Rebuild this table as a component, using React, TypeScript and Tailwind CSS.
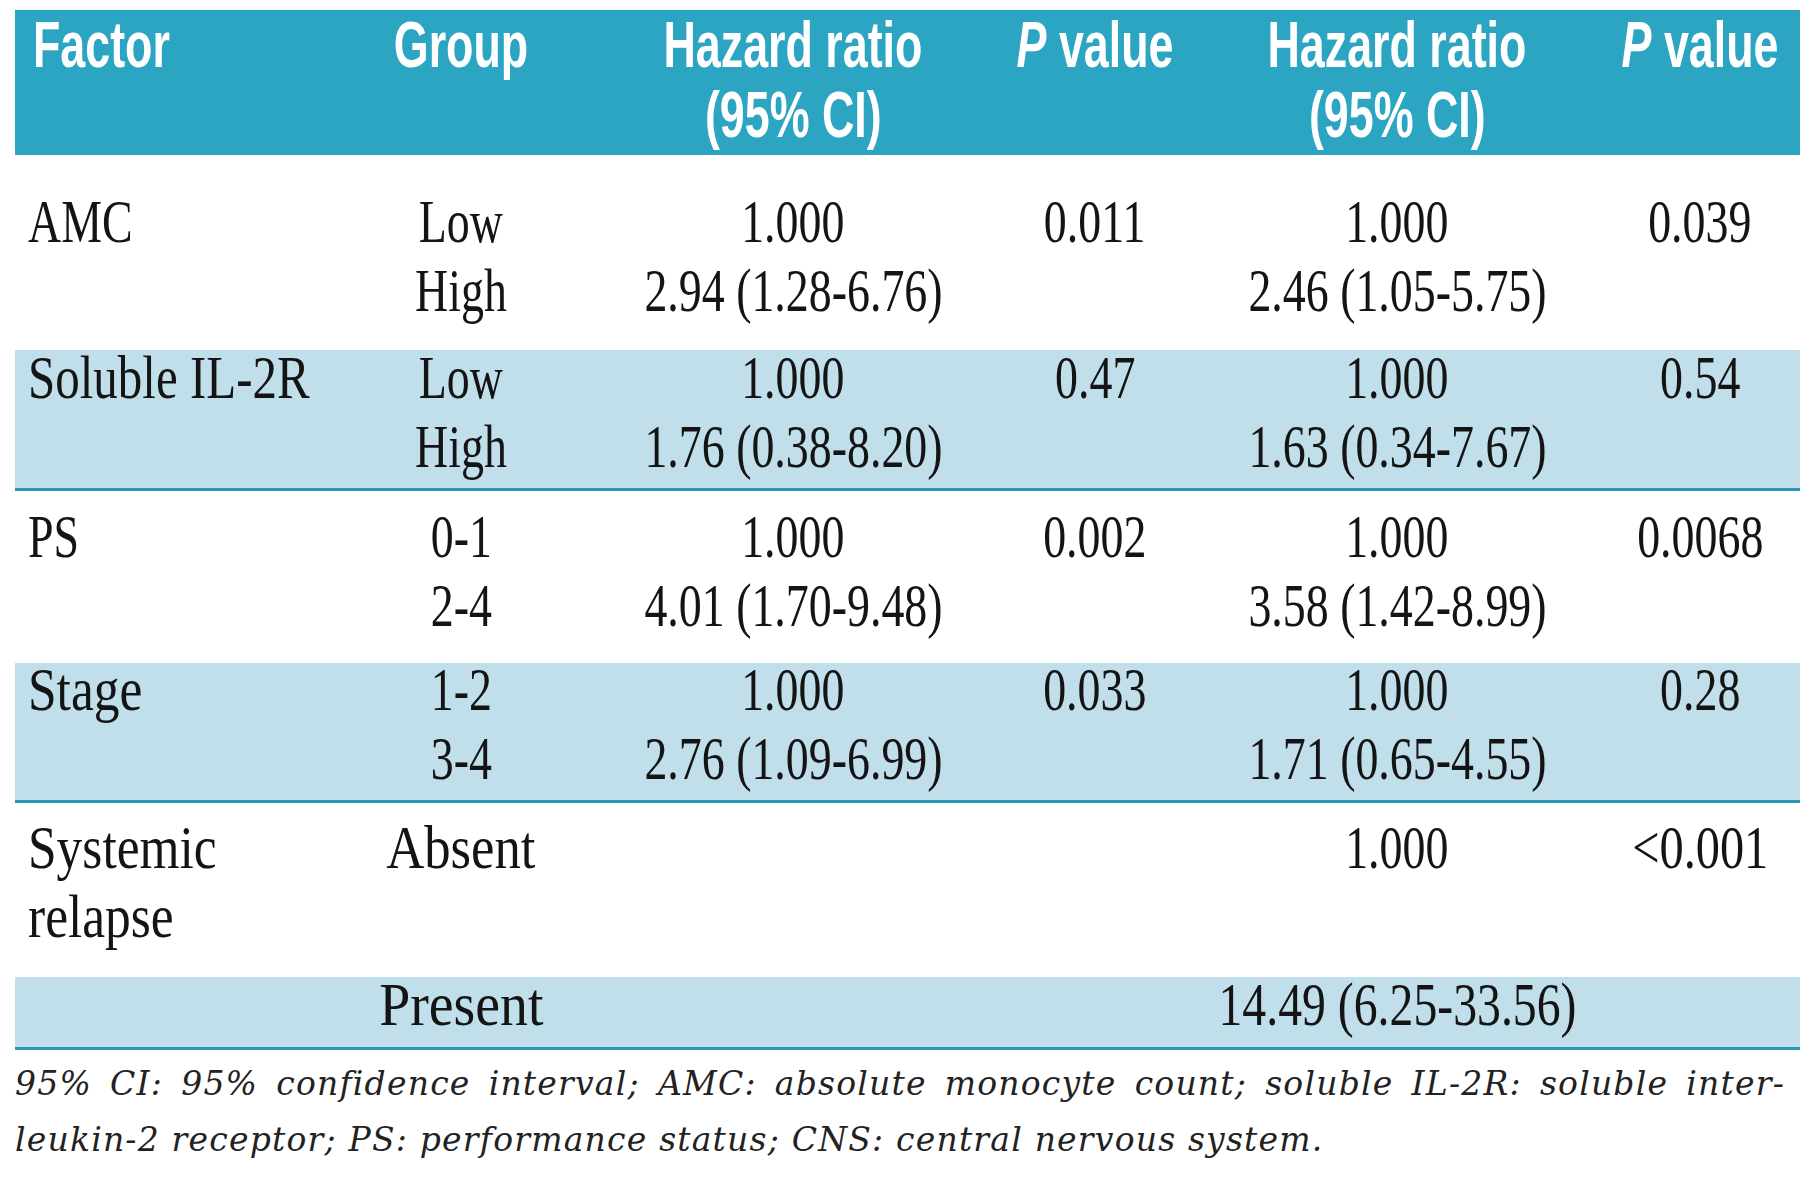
import React from "react";

type Ln = { t: string; s?: string };

type Row = {
  factor: Ln[];
  group: Ln[];
  hr1: Ln[];
  p1: Ln[];
  hr2: Ln[];
  p2: Ln[];
  rowCls: string;
  gridCls: string;
};

const rows: Row[] = [
  {
    factor: [{ t: "AMC" }],
    group: [{ t: "Low" }, { t: "High" }],
    hr1: [{ t: "1.000" }, { t: "2.94 (1.28-6.76)" }],
    p1: [{ t: "0.011" }],
    hr2: [{ t: "1.000" }, { t: "2.46 (1.05-5.75)" }],
    p2: [{ t: "0.039" }],
    rowCls: "flow-root h-[195px] bg-white",
    gridCls: "pt-[32px]",
  },
  {
    factor: [{ t: "Soluble IL-2R", s: "scale-x-[0.79]" }],
    group: [{ t: "Low" }, { t: "High" }],
    hr1: [{ t: "1.000" }, { t: "1.76 (0.38-8.20)" }],
    p1: [{ t: "0.47" }],
    hr2: [{ t: "1.000" }, { t: "1.63 (0.34-7.67)" }],
    p2: [{ t: "0.54" }],
    rowCls: "flow-root h-[141px] bg-[#c0dfea] border-b-[3px] border-[#2a97b8]",
    gridCls: "-mt-[7px]",
  },
  {
    factor: [{ t: "PS" }],
    group: [{ t: "0-1" }, { t: "2-4" }],
    hr1: [{ t: "1.000" }, { t: "4.01 (1.70-9.48)" }],
    p1: [{ t: "0.002" }],
    hr2: [{ t: "1.000" }, { t: "3.58 (1.42-8.99)" }],
    p2: [{ t: "0.0068" }],
    rowCls: "flow-root h-[172px] bg-white",
    gridCls: "pt-[11px]",
  },
  {
    factor: [{ t: "Stage", s: "scale-x-[0.83]" }],
    group: [{ t: "1-2" }, { t: "3-4" }],
    hr1: [{ t: "1.000" }, { t: "2.76 (1.09-6.99)" }],
    p1: [{ t: "0.033" }],
    hr2: [{ t: "1.000" }, { t: "1.71 (0.65-4.55)" }],
    p2: [{ t: "0.28" }],
    rowCls: "flow-root h-[140px] bg-[#c0dfea] border-b-[3px] border-[#2a97b8]",
    gridCls: "-mt-[8px]",
  },
  {
    factor: [
      { t: "Systemic", s: "scale-x-[0.83]" },
      { t: "relapse", s: "scale-x-[0.83]" },
    ],
    group: [{ t: "Absent", s: "scale-x-[0.85]" }],
    hr1: [],
    p1: [],
    hr2: [{ t: "1.000" }],
    p2: [{ t: "<0.001", s: "scale-x-[0.78]" }],
    rowCls: "flow-root h-[174px] bg-white",
    gridCls: "pt-[10px]",
  },
  {
    factor: [],
    group: [{ t: "Present", s: "scale-x-[0.9]" }],
    hr1: [],
    p1: [],
    hr2: [{ t: "14.49 (6.25-33.56)", s: "scale-x-[0.77]" }],
    p2: [],
    rowCls: "flow-root h-[73px] bg-[#c0dfea] border-b-[3px] border-[#2a97b8]",
    gridCls: "-mt-[7px]",
  },
];

// body text: condensed serif, squeezed horizontally
const Cell = ({ lines, left }: { lines: Ln[]; left?: boolean }) => (
  <div className={left ? "pl-[13px]" : ""}>
    {lines.map((l, i) => (
      <div key={i} className={left ? "flex justify-start" : "flex justify-center"}>
        <span
          className={
            "inline-block whitespace-nowrap " +
            (l.s ?? "scale-x-[0.74]") +
            (left ? " origin-left" : " origin-center")
          }
        >
          {l.t}
        </span>
      </div>
    ))}
  </div>
);

const Head = ({ children, left }: { children: React.ReactNode; left?: boolean }) => (
  <div className={left ? "flex justify-start" : "flex justify-center"}>
    <span
      className={
        left
          ? "inline-block whitespace-nowrap scale-x-[0.7] origin-left"
          : "inline-block whitespace-nowrap scale-x-[0.7] origin-center"
      }
    >
      {children}
    </span>
  </div>
);

const cols = "grid grid-cols-[325px_242px_422px_182px_422px_184px]";

export default function App() {
  return (
    <div className="min-h-screen w-[1800px] bg-white pl-[15px] pt-[10px] overflow-hidden">
      <div className="w-[1785px]">
        {/* header */}
        <div className="h-[145px] bg-[#2ba5c1] text-white font-bold text-[64px] leading-[70px] font-['Liberation_Sans',Arial,sans-serif]">
          <div className={cols}>
            <div className="pl-[18px]">
              <Head left>Factor</Head>
            </div>
            <Head>Group</Head>
            <div>
              <Head>Hazard ratio</Head>
              <Head>(95% CI)</Head>
            </div>
            <Head>
              <i>P</i> value
            </Head>
            <div>
              <Head>Hazard ratio</Head>
              <Head>(95% CI)</Head>
            </div>
            <Head>
              <i>P</i> value
            </Head>
          </div>
        </div>

        {/* body */}
        <div className="text-[62px] leading-[69px] text-[#141414] font-['Liberation_Serif','Times_New_Roman',serif]">
          {rows.map((r, i) => (
            <div key={i} className={r.rowCls}>
              <div className={cols + " " + r.gridCls}>
                <Cell lines={r.factor} left />
                <Cell lines={r.group} />
                <Cell lines={r.hr1} />
                <Cell lines={r.p1} />
                <Cell lines={r.hr2} />
                <Cell lines={r.p2} />
              </div>
            </div>
          ))}
        </div>

        {/* footnote */}
        <div className="mt-[6px] w-[1770px] italic text-[33px] leading-[56px] tracking-[1.2px] text-[#222] font-['DejaVu_Serif','Liberation_Serif',serif]">
          <div className="text-justify [text-align-last:justify]">
            95% CI: 95% confidence interval; AMC: absolute monocyte count; soluble IL-2R: soluble inter-
          </div>
          <div>leukin-2 receptor; PS: performance status; CNS: central nervous system.</div>
        </div>
      </div>
    </div>
  );
}
